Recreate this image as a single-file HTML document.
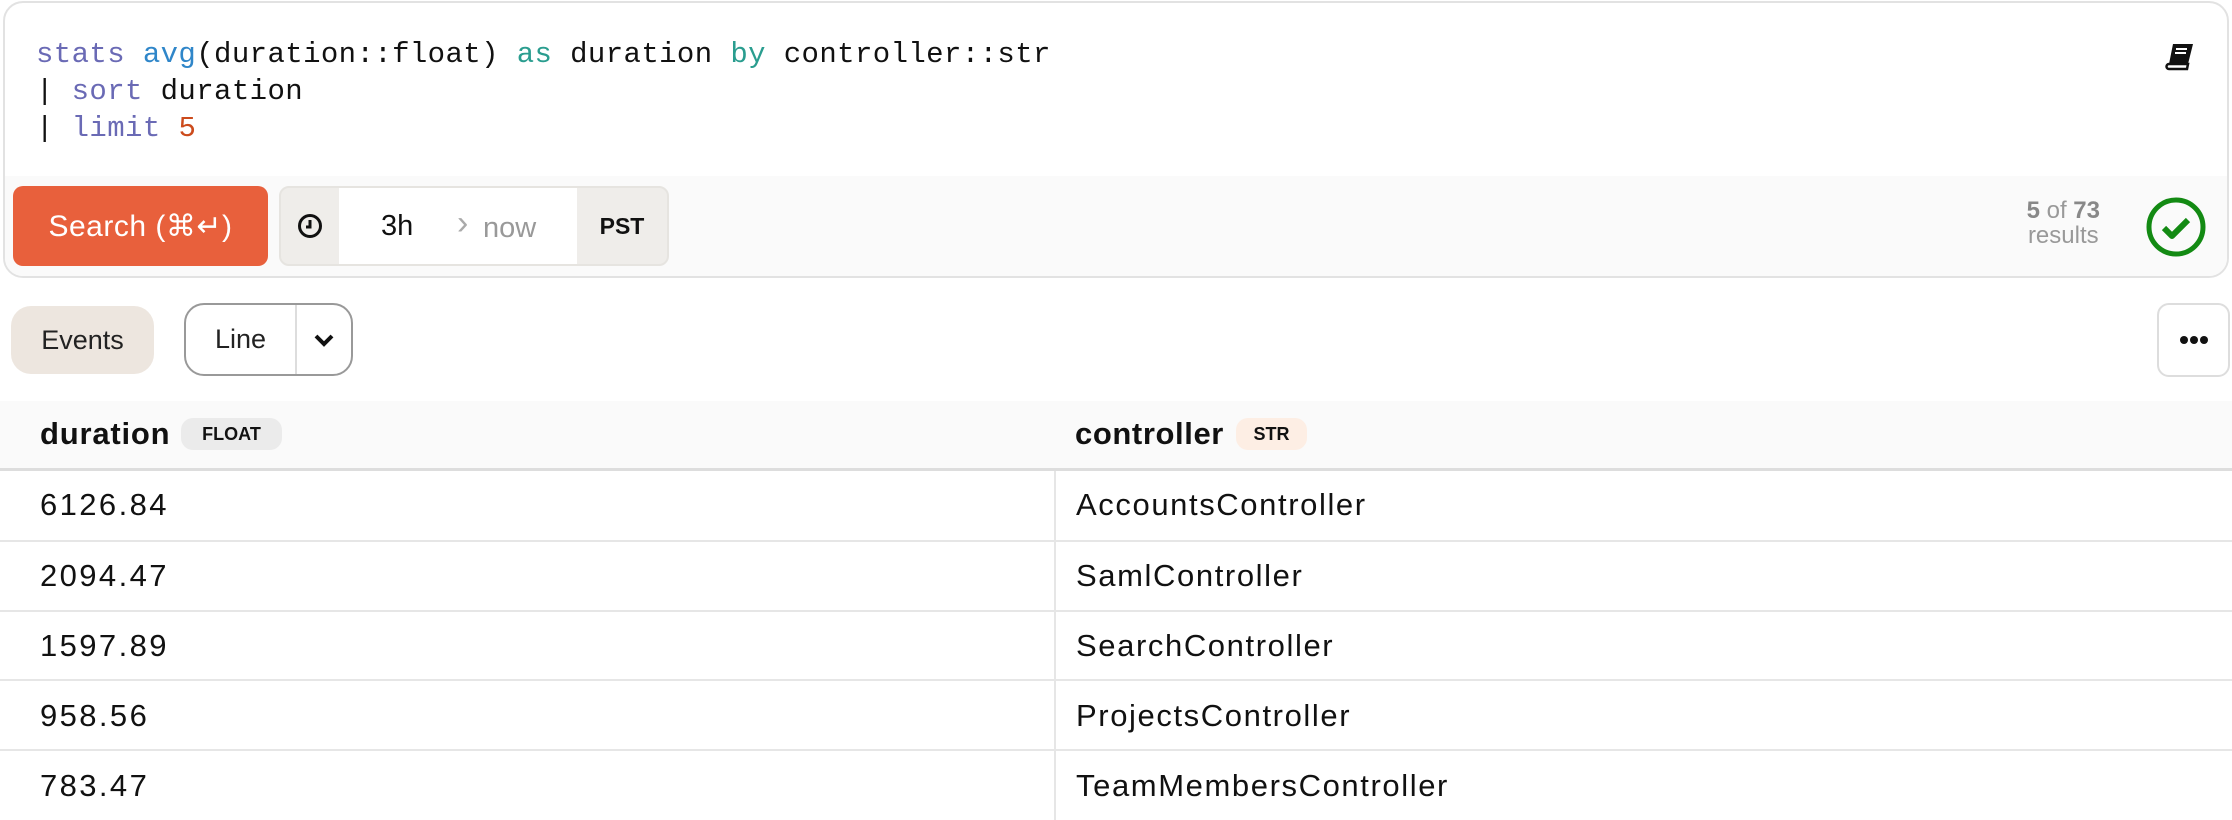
<!DOCTYPE html>
<html><head><meta charset="utf-8"><style>
*{box-sizing:border-box;margin:0;padding:0}
body{width:2232px;height:820px;background:#fff;font-family:"Liberation Sans",sans-serif;position:relative;overflow:hidden;color:#111}
.abs{position:absolute}
.card{left:3px;top:1px;width:2226px;height:277px;border:2px solid #e2e2e2;border-radius:20px;overflow:hidden;background:#fff}
.strip{left:0;top:173px;width:100%;height:104px;background:#fafafa}
.code{left:31px;top:33px;font-family:"Liberation Mono",monospace;font-size:29px;letter-spacing:0.4px;line-height:37px;color:#111;white-space:pre}
.kw{color:#6a6ab5}.fn{color:#2f86c9}.as{color:#2a9d8f}.num{color:#cc4b1c}
.search{left:13px;top:186px;width:255px;height:80px;background:#e8603c;border-radius:10px;color:#fff;font-size:30px;letter-spacing:.5px;display:flex;align-items:center;justify-content:center}
.tg{left:279px;top:186px;width:390px;height:80px;border:2px solid #e6e4e0;border-radius:10px;overflow:hidden;display:flex;background:#efedea}
.row{left:0;width:2232px;border-bottom:2px solid #e6e6e6}
.cell{position:absolute;font-size:31px;letter-spacing:1.6px;color:#111}
.n{letter-spacing:2.4px}
</style></head><body>
<div class="abs card">
  <div class="abs strip"></div>
  <div class="abs code"><span class="kw">stats</span> <span class="fn">avg</span>(duration::float) <span class="as">as</span> duration <span class="as">by</span> controller::str
| <span class="kw">sort</span> duration
| <span class="kw">limit</span> <span class="num">5</span></div>
  <svg class="abs" style="left:2160px;top:40px" width="30" height="28" viewBox="0 0 30 28"><path d="M8 1h20l-5 20H4z" fill="#111"/><path d="M4 21h19l-1 5H4a2.5 2.5 0 0 1 0-5z" fill="#fff" stroke="#111" stroke-width="2.5"/><path d="M11 6h11M10 10h11" stroke="#fff" stroke-width="2"/></svg>
  <div class="abs" style="right:127px;top:195px;text-align:center;color:#999;font-size:24px;line-height:25px"><b style="color:#888">5</b> of <b style="color:#888">73</b><br>results</div>
  <svg class="abs" style="left:2140px;top:193px" width="62" height="62" viewBox="0 0 62 62"><circle cx="31" cy="31" r="27" fill="none" stroke="#138a13" stroke-width="5"/><path d="M19 32l8 8 16-16" fill="none" stroke="#138a13" stroke-width="6" stroke-linejoin="round"/></svg>
</div>
<div class="abs search">Search (⌘↵)</div>
<div class="abs tg">
  <div style="width:58px;display:flex;align-items:center;justify-content:center"><svg width="26" height="26" viewBox="0 0 26 26"><circle cx="13" cy="13" r="10.5" fill="none" stroke="#111" stroke-width="3"/><path d="M13 7v7h-4" fill="none" stroke="#111" stroke-width="3"/></svg></div>
  <div style="width:238px;background:#fff;position:relative;font-size:29px">
    <span class="abs" style="left:42px;top:22px">3h</span>
    <span class="abs" style="left:118px;top:16px;color:#aaa;font-size:34px">›</span>
    <span class="abs" style="left:144px;top:24px;color:#999">now</span>
  </div>
  <div style="flex:1;display:flex;align-items:center;justify-content:center;font-weight:bold;font-size:23px">PST</div>
</div>
<div class="abs" style="left:11px;top:306px;width:143px;height:68px;background:#ede6df;border-radius:20px;font-size:27px;color:#222;display:flex;align-items:center;justify-content:center">Events</div>
<div class="abs" style="left:184px;top:303px;width:169px;height:73px;border:2px solid #999;border-radius:20px;display:flex">
  <div style="width:111px;border-right:2px solid #ddd;display:flex;align-items:center;justify-content:center;font-size:27px;color:#222">Line</div>
  <div style="flex:1;display:flex;align-items:center;justify-content:center"><svg width="24" height="18" viewBox="0 0 24 18"><path d="M4 5l8 8 8-8" fill="none" stroke="#111" stroke-width="4"/></svg></div>
</div>
<div class="abs" style="left:2157px;top:303px;width:73px;height:74px;border:2px solid #ddd;border-radius:12px;display:flex;align-items:center;justify-content:center"><svg width="28" height="10"><circle cx="4" cy="5" r="4" fill="#111"/><circle cx="14" cy="5" r="4" fill="#111"/><circle cx="24" cy="5" r="4" fill="#111"/></svg></div>
<div class="abs" style="left:0;top:401px;width:2232px;height:70px;background:#fafafa;border-bottom:3px solid #ddd"></div>
<div class="abs" style="left:40px;top:416px;font-size:31px;font-weight:bold;letter-spacing:0.8px">duration</div>
<div class="abs" style="left:181px;top:418px;width:101px;height:32px;background:#ebebeb;border-radius:12px;font-size:18px;font-weight:bold;display:flex;align-items:center;justify-content:center">FLOAT</div>
<div class="abs" style="left:1075px;top:416px;font-size:31px;font-weight:bold;letter-spacing:0.6px">controller</div>
<div class="abs" style="left:1236px;top:418px;width:71px;height:32px;background:#fdeee4;border-radius:12px;font-size:18px;font-weight:bold;display:flex;align-items:center;justify-content:center">STR</div>
<div class="abs" style="left:1054px;top:471px;width:2px;height:349px;background:#e6e6e6"></div>
<div class="abs row" style="top:540px"></div>
<div class="abs row" style="top:610px"></div>
<div class="abs row" style="top:679px"></div>
<div class="abs row" style="top:749px"></div>
<div class="cell n" style="left:40px;top:487px">6126.84</div><div class="cell" style="left:1076px;top:487px">AccountsController</div>
<div class="cell n" style="left:40px;top:558px">2094.47</div><div class="cell" style="left:1076px;top:558px">SamlController</div>
<div class="cell n" style="left:40px;top:628px">1597.89</div><div class="cell" style="left:1076px;top:628px">SearchController</div>
<div class="cell n" style="left:40px;top:698px">958.56</div><div class="cell" style="left:1076px;top:698px">ProjectsController</div>
<div class="cell n" style="left:40px;top:768px">783.47</div><div class="cell" style="left:1076px;top:768px">TeamMembersController</div>
</body></html>
